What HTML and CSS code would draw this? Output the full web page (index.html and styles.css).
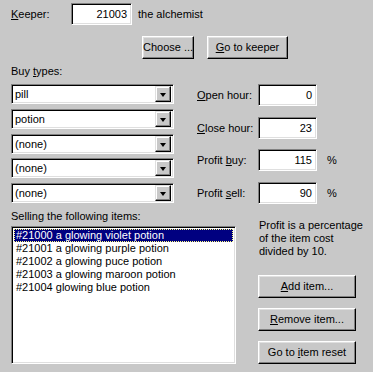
FILE: index.html
```html
<!DOCTYPE html>
<html lang="en">
<head>
    <meta charset="UTF-8">
    <title>Keeper</title>
    <link rel="stylesheet" href="styles.css">
</head>
<body>
    <div class="dialog">
        <div class="keeper-row">
            <span class="keeper-label"><u>K</u>eeper:</span>
            <div class="field keeper-field">21003</div>
            <span class="keeper-name">the alchemist</span>
        </div>
        <div class="keeper-buttons">
            <div class="btn choose-btn">Choose ...</div>
            <div class="btn goto-btn"><u>G</u>o to keeper</div>
        </div>

        <div class="types-section">
            <div class="types-col">
                <div class="section-label">Buy <u>t</u>ypes:</div>
                <div class="combo-list">
                    <div class="combo"><span class="combo-text">pill</span><span class="combo-arrow"></span></div>
                    <div class="combo"><span class="combo-text">potion</span><span class="combo-arrow"></span></div>
                    <div class="combo"><span class="combo-text">(none)</span><span class="combo-arrow"></span></div>
                    <div class="combo"><span class="combo-text">(none)</span><span class="combo-arrow"></span></div>
                    <div class="combo"><span class="combo-text">(none)</span><span class="combo-arrow"></span></div>
                </div>
            </div>
            <div class="hours-col">
                <div class="hour-row">
                    <span class="hour-label"><u>O</u>pen hour:</span>
                    <div class="field hour-field">0</div>
                </div>
                <div class="hour-row">
                    <span class="hour-label"><u>C</u>lose hour:</span>
                    <div class="field hour-field">23</div>
                </div>
                <div class="hour-row">
                    <span class="hour-label">Profit <u>b</u>uy:</span>
                    <div class="field hour-field">115</div>
                    <span class="percent">%</span>
                </div>
                <div class="hour-row">
                    <span class="hour-label">Profit <u>s</u>ell:</span>
                    <div class="field hour-field">90</div>
                    <span class="percent">%</span>
                </div>
            </div>
        </div>

        <div class="items-section">
            <div class="items-col">
                <div class="items-label">Selling the following items:</div>
                <div class="listbox">
                    <div class="list-item selected">#21000 a glowing violet potion</div>
                    <div class="list-item">#21001 a glowing purple potion</div>
                    <div class="list-item">#21002 a glowing puce potion</div>
                    <div class="list-item">#21003 a glowing maroon potion</div>
                    <div class="list-item">#21004 glowing blue potion</div>
                </div>
            </div>
            <div class="actions-col">
                <div class="profit-note">Profit is a percentage of the item cost divided by 10.</div>
                <div class="action-buttons">
                    <div class="btn action-btn"><u>A</u>dd item...</div>
                    <div class="btn action-btn"><u>R</u>emove item...</div>
                    <div class="btn action-btn">Go to <u>i</u>tem reset</div>
                </div>
            </div>
        </div>
    </div>
</body>
</html>
```

FILE: styles.css
```css
body {
    margin: 0;
    background: #c8c8c8;
    font-family: 'Liberation Sans', Arial, sans-serif;
    font-size: 11px;
    color: #000;
}

.dialog {
    width: 373px;
    height: 372px;
    padding: 3px 0 0 11px;
    box-sizing: border-box;
}

/* sunken edit box */
.field {
    background: white;
    border: 1px solid;
    border-color: #808080 #fff #fff #808080;
    box-shadow: inset 1px 1px #000, inset -1px -1px #dfdfdf;
    box-sizing: border-box;
    text-align: right;
    padding: 3px 4px 0 0;
    line-height: 14px;
}

/* raised push button */
.btn {
    border: 1px solid;
    border-color: #fff #000 #000 #fff;
    box-shadow: inset -1px -1px #808080, inset 1px 1px #e0e0e0;
    box-sizing: border-box;
    height: 23px;
    line-height: 21px;
    text-align: center;
    white-space: nowrap;
}

.keeper-row {
    display: flex;
    align-items: center;
    height: 22px;
}

.keeper-label {
    width: 60px;
}

.keeper-field {
    width: 61px;
    height: 22px;
}

.keeper-name {
    margin-left: 6px;
}

.keeper-buttons {
    display: flex;
    gap: 13px;
    margin: 11px 0 0 131px;
}

.choose-btn {
    width: 52px;
}

.goto-btn {
    width: 81px;
}

.types-section {
    display: flex;
    margin-top: 5px;
}

.types-col {
    width: 163px;
}

.section-label {
    height: 20px;
    line-height: 14px;
}

.combo-list {
    display: flex;
    flex-direction: column;
    gap: 4.75px;
}

.combo {
    display: flex;
    align-items: center;
    height: 20px;
    background: white;
    border: 1px solid;
    border-color: #808080 #fff #fff #808080;
    box-shadow: inset 1px 1px #000, inset -1px -1px #dfdfdf;
    box-sizing: border-box;
    padding: 2px;
}

.combo-text {
    flex: 1;
    padding-left: 1px;
    line-height: 14px;
}

.combo-arrow {
    width: 16px;
    height: 16px;
    box-sizing: border-box;
    background: #c8c8c8;
    border: 1px solid;
    border-color: #e0e0e0 #000 #000 #e0e0e0;
    box-shadow: inset -1px -1px #808080, inset 1px 1px #fff;
    position: relative;
}

.combo-arrow::after {
    content: "";
    position: absolute;
    left: 4px;
    top: 6px;
    border-left: 3.5px solid transparent;
    border-right: 3.5px solid transparent;
    border-top: 4px solid #000;
}

.hours-col {
    display: flex;
    flex-direction: column;
    gap: 10.7px;
    margin: 20px 0 0 23px;
}

.hour-row {
    display: flex;
    align-items: center;
    height: 22px;
}

.hour-label {
    width: 61px;
}

.hour-field {
    width: 59px;
    height: 22px;
}

.percent {
    margin-left: 10px;
}

.items-section {
    display: flex;
    margin-top: 4px;
}

.items-col {
    width: 225px;
}

.items-label {
    height: 18px;
    line-height: 16px;
}

.listbox {
    height: 138px;
    background: white;
    border: 1px solid;
    border-color: #808080 #fff #fff #808080;
    box-shadow: inset 1px 1px #000, inset -1px -1px #dfdfdf;
    box-sizing: border-box;
    padding: 2px;
}

.list-item {
    height: 13px;
    line-height: 13px;
    padding-left: 2px;
}

.list-item.selected {
    background: #000080;
    color: white;
    outline: 1px dotted #ffff80;
    outline-offset: -1px;
}

.actions-col {
    margin-left: 22px;
    width: 98px;
}

.profit-note {
    margin: 11px 0 0 1px;
    line-height: 13px;
    width: 110px;
}

.action-buttons {
    display: flex;
    flex-direction: column;
    gap: 10px;
    margin-top: 17px;
}

.action-btn {
    width: 98px;
}
```
